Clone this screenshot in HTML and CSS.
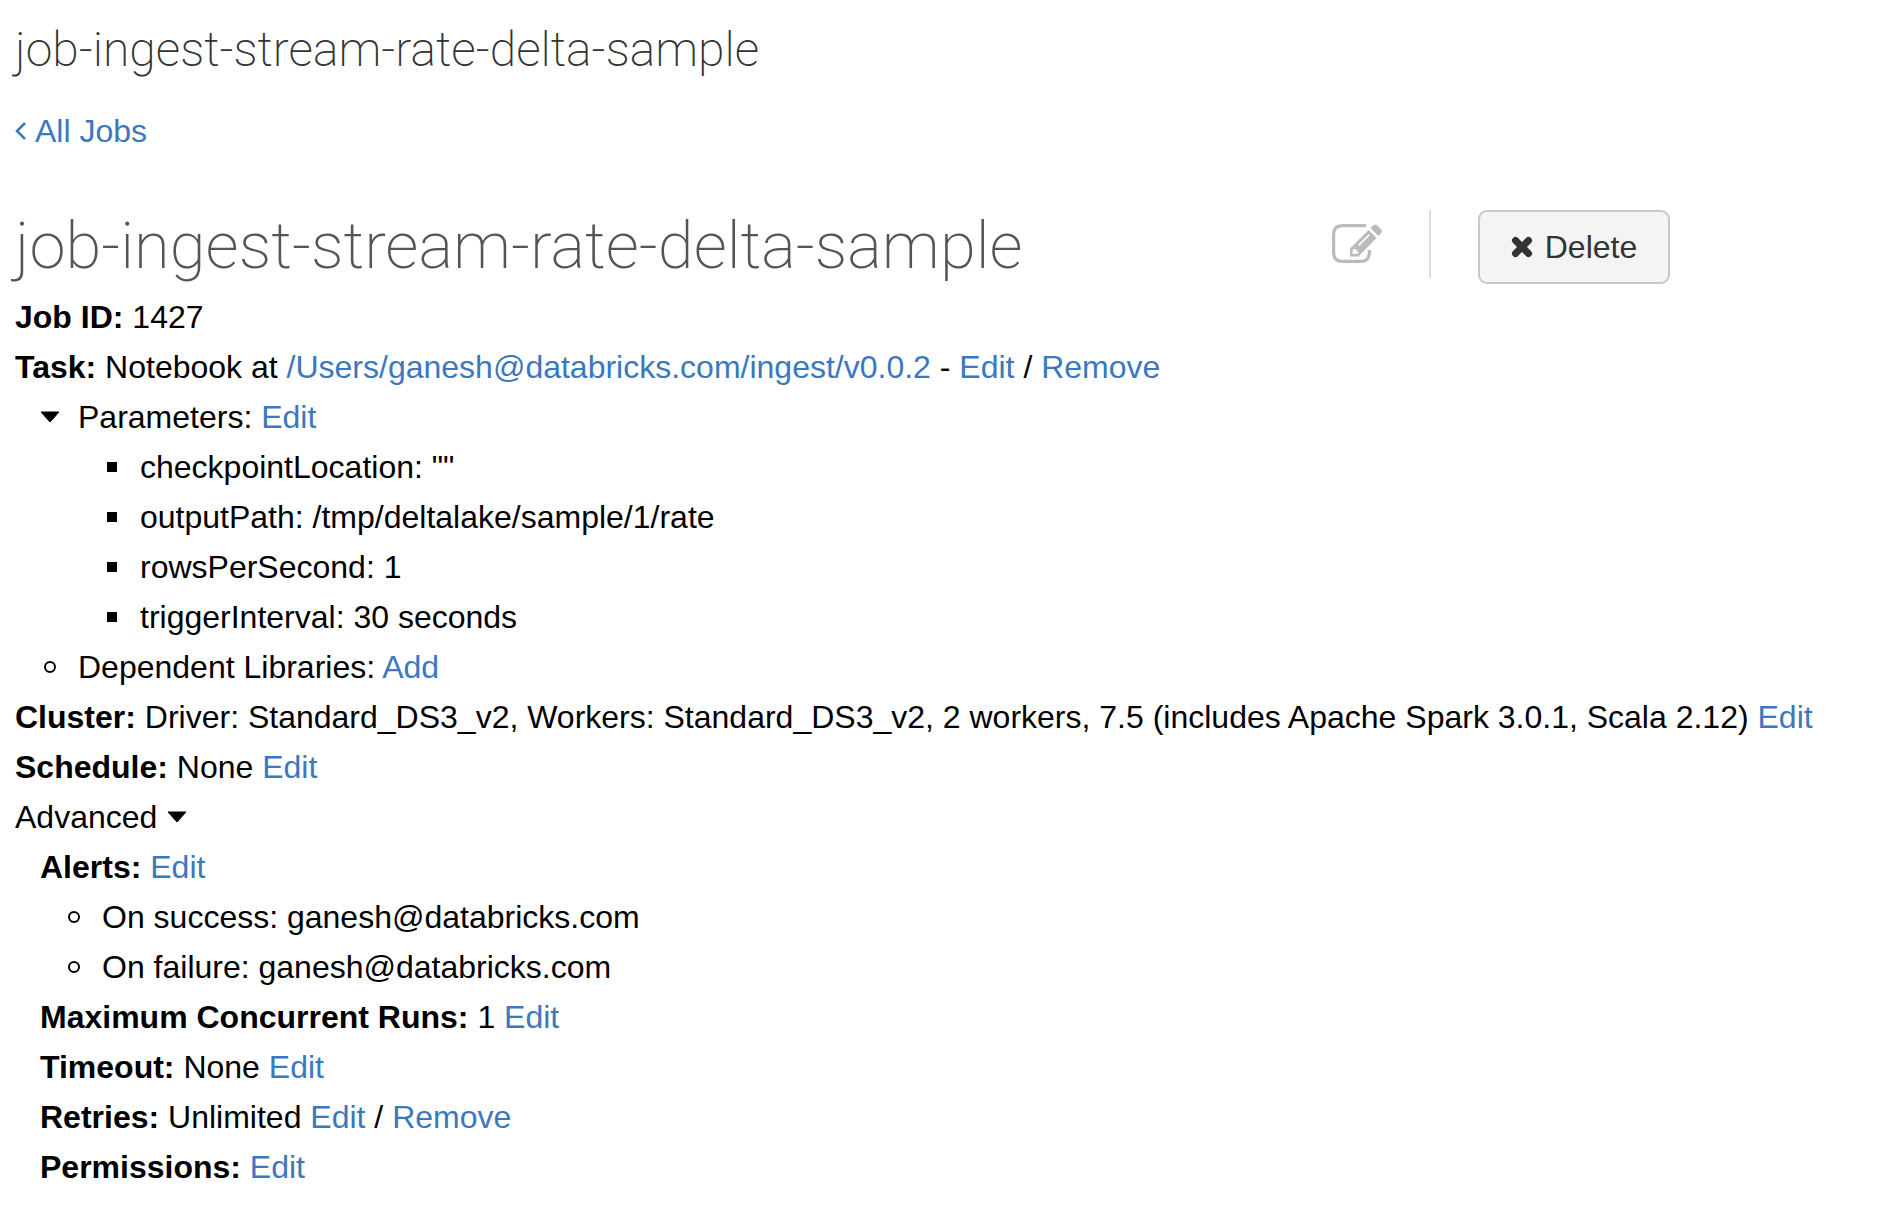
FILE: index.html
```html
<!DOCTYPE html>
<html lang="en">
<head>
<meta charset="utf-8">
<meta name="viewport" content="width=device-width, initial-scale=1">
<title>job-ingest-stream-rate-delta-sample</title>
<link rel="stylesheet" href="styles.css">
</head>
<body>
<header class="topbar">
  <p class="topbar-title">job-ingest-stream-rate-delta-sample</p>
  <nav><a class="back" href="#jobs"><svg class="chevron" viewBox="0 0 12 20" aria-hidden="true"><path d="M10 2 2 10l8 8"/></svg>All Jobs</a></nav>
</header>
<main>
  <div class="job-header">
    <h1 class="job-title">job-ingest-stream-rate-delta-sample</h1>
    <div class="actions">
      <button class="icon-button" type="button" aria-label="Rename job">
        <svg class="edit-icon" viewBox="0 0 50 40" aria-hidden="true">
          <path d="M34 1.600H10.500Q1.600 1.600 1.600 10.500V28.500Q1.600 37.400 10.500 37.400H28.500Q37.400 37.400 37.400 28.500V26" fill="none" stroke="currentColor" stroke-width="3.200"/>
          <path fill="currentColor" fill-rule="evenodd" d="M36.500 6 44.500 14 26.500 32.500H18V24.500ZM20.600 26.200V29.900H25.400L26.800 28.400 25 26.700 23.400 24.900 22 24.800ZM26 20.800 36.600 10.200 37.800 11.200 27.200 22Z"/>
          <path fill="currentColor" d="M38.500 4 41.200 1.300Q43.200-.5 45.200 1.300L49 5.200Q50.700 7.200 49 9.200L46.400 11.900Z"/>
        </svg>
      </button>
      <span class="divider"></span>
      <button class="delete" type="button">
        <svg class="cross" viewBox="0 0 22 22" aria-hidden="true"><path d="M4.500 4.500l13 13M17.500 4.500l-13 13"/></svg>
        Delete
      </button>
    </div>
  </div>

  <div class="row"><b>Job ID:</b> 1427</div>
  <div class="row"><b>Task:</b> Notebook at <a href="#notebook">/Users/ganesh@databricks.com/ingest/v0.0.2</a> - <a href="#task">Edit</a> / <a href="#remove">Remove</a></div>
  <ul class="list">
    <li class="item">
      <button class="toggle marker" type="button" aria-label="Toggle parameters"><svg class="caret" viewBox="0 0 20 12" aria-hidden="true"><path d="M1 1H19L10 11Z"/></svg></button>
      <div>
        Parameters: <a href="#parameters">Edit</a>
        <ul class="list">
          <li class="item"><span class="marker square"></span><div>checkpointLocation: ""</div></li>
          <li class="item"><span class="marker square"></span><div>outputPath: /tmp/deltalake/sample/1/rate</div></li>
          <li class="item"><span class="marker square"></span><div>rowsPerSecond: 1</div></li>
          <li class="item"><span class="marker square"></span><div>triggerInterval: 30 seconds</div></li>
        </ul>
      </div>
    </li>
    <li class="item"><span class="marker circle"></span><div>Dependent Libraries: <a href="#libraries">Add</a></div></li>
  </ul>
  <div class="row"><b>Cluster:</b> Driver: Standard_DS3_v2, Workers: Standard_DS3_v2, 2 workers, 7.5 (includes Apache Spark 3.0.1, Scala 2.12) <a href="#cluster">Edit</a></div>
  <div class="row"><b>Schedule:</b> None <a href="#schedule">Edit</a></div>
  <button class="toggle advanced" type="button">Advanced <svg class="caret" viewBox="0 0 20 12" aria-hidden="true"><path d="M1 1H19L10 11Z"/></svg></button>
  <section class="list">
    <div class="row"><b>Alerts:</b> <a href="#alerts">Edit</a></div>
    <ul class="list">
      <li class="item"><span class="marker circle"></span><div>On success: ganesh@databricks.com</div></li>
      <li class="item"><span class="marker circle"></span><div>On failure: ganesh@databricks.com</div></li>
    </ul>
    <div class="row"><b>Maximum Concurrent Runs:</b> 1 <a href="#runs">Edit</a></div>
    <div class="row"><b>Timeout:</b> None <a href="#timeout">Edit</a></div>
    <div class="row"><b>Retries:</b> Unlimited <a href="#retries">Edit</a> / <a href="#retries-remove">Remove</a></div>
    <div class="row"><b>Permissions:</b> <a href="#permissions">Edit</a></div>
  </section>
</main>
</body>
</html>
```
FILE: styles.css
```css
* { box-sizing: border-box; }

body {
  margin: 0;
  padding: 16px 15px 0;
  background: #fff;
  color: #000;
  font-family: "Liberation Sans", Arial, sans-serif;
  font-size: 32px;
  line-height: 50px;
}

a { color: #3b78bd; text-decoration: none; }
a:hover { text-decoration: underline; }

button {
  font: inherit;
  color: inherit;
  cursor: pointer;
}

.topbar-title {
  margin: 0 0 21px;
  color: #333;
  font-family: Roboto, sans-serif;
  font-size: 48px;
  font-weight: 200;
  line-height: 68px;
}

.back {
  display: inline-flex;
  align-items: center;
  gap: 8px;
}

.chevron {
  width: 12px;
  height: 20px;
  fill: none;
  stroke: currentColor;
  stroke-width: 2.5;
}

.job-header {
  display: flex;
  align-items: flex-start;
  justify-content: space-between;
  margin-top: 48px;
  padding-right: 199px;
}

.job-title {
  margin: 0 0 4px;
  color: #555;
  font-family: Roboto, sans-serif;
  font-size: 65px;
  font-weight: 200;
  line-height: 84px;
}

.actions {
  display: flex;
  align-items: flex-start;
  gap: 47px;
  padding-top: 6px;
}

.icon-button {
  display: flex;
  align-items: center;
  height: 68px;
  padding: 0;
  border: 0;
  background: none;
  color: #bbb;
}

.edit-icon { width: 50px; height: 40px; }

.divider {
  width: 2px;
  height: 68px;
  background: #ddd;
}

.delete {
  display: flex;
  align-items: center;
  justify-content: center;
  gap: 12px;
  width: 192px;
  height: 74px;
  padding: 0;
  border: 2px solid #c8c8c8;
  border-radius: 9px;
  background: #f4f4f4;
  color: #333;
}

.cross {
  width: 22px;
  height: 22px;
  fill: none;
  stroke: currentColor;
  stroke-width: 7;
  stroke-linecap: round;
}

.list {
  margin: 0;
  padding: 0 0 0 25px;
  list-style: none;
}

.list .list { padding-left: 24px; }

.item {
  display: grid;
  grid-template-columns: 38px 1fr;
}

.marker {
  display: flex;
  align-items: center;
  justify-content: center;
  width: 20px;
  height: 50px;
}

.square::before {
  content: "";
  width: 10px;
  height: 10px;
  background: #000;
}

.circle::before {
  content: "";
  width: 8px;
  height: 8px;
  border: 2px solid #000;
  border-radius: 50%;
}

.toggle {
  padding: 0;
  border: 0;
  background: none;
}

.caret {
  width: 20px;
  height: 12px;
  stroke: currentColor;
  stroke-linejoin: round;
}

.advanced {
  display: flex;
  align-items: center;
  gap: 10px;
}
```
